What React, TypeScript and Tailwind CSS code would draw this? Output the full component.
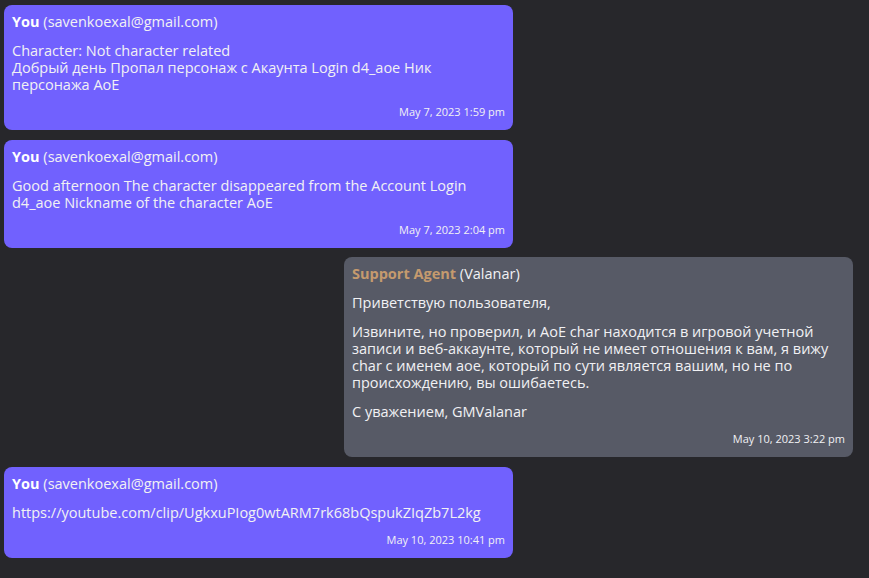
import React from 'react';

interface Message {
  id: number;
  mine: boolean;
  role: string;
  name: string;
  paragraphs: string[][];
  date: string;
}

const messages: Message[] = [
  {
    id: 1,
    mine: true,
    role: 'You',
    name: 'savenkoexal@gmail.com',
    paragraphs: [
      [
        'Character: Not character related',
        'Добрый день Пропал персонаж с Акаунта Login d4_aoe Ник',
        'персонажа AoE',
      ],
    ],
    date: 'May 7, 2023 1:59 pm',
  },
  {
    id: 2,
    mine: true,
    role: 'You',
    name: 'savenkoexal@gmail.com',
    paragraphs: [
      [
        'Good afternoon The character disappeared from the Account Login',
        'd4_aoe Nickname of the character AoE',
      ],
    ],
    date: 'May 7, 2023 2:04 pm',
  },
  {
    id: 3,
    mine: false,
    role: 'Support Agent',
    name: 'Valanar',
    paragraphs: [
      ['Приветствую пользователя,'],
      [
        'Извините, но проверил, и AoE char находится в игровой учетной',
        'записи и веб-аккаунте, который не имеет отношения к вам, я вижу',
        'char с именем aoe, который по сути является вашим, но не по',
        'происхождению, вы ошибаетесь.',
      ],
      ['С уважением, GMValanar'],
    ],
    date: 'May 10, 2023 3:22 pm',
  },
  {
    id: 4,
    mine: true,
    role: 'You',
    name: 'savenkoexal@gmail.com',
    paragraphs: [['https://youtube.com/clip/UgkxuPIog0wtARM7rk68bQspukZIqZb7L2kg']],
    date: 'May 10, 2023 10:41 pm',
  },
];

const Bubble = ({ msg }: { msg: Message }) => (
  <div
    className={
      msg.mine
        ? 'w-[509px] self-start rounded-lg bg-[#7161fe] px-2 pt-2 pb-[11px]'
        : 'w-[509px] self-end rounded-lg bg-[#575a66] px-2 pt-2 pb-[11px]'
    }
  >
    <div className="text-[14.5px] leading-[17px] whitespace-nowrap">
      <span className={msg.mine ? 'font-bold text-white' : 'font-bold text-[#c59a6e]'}>
        {msg.role}
      </span>{' '}
      <span>({msg.name})</span>
    </div>
    {msg.paragraphs.map((p, i) => (
      <p key={i} className="mt-3 text-[14.5px] leading-[17px]">
        {p.map((line, j) => (
          <span key={j} className="block whitespace-nowrap">
            {line}
          </span>
        ))}
      </p>
    ))}
    <div className="mt-3 text-right text-[11px] leading-[14px]">{msg.date}</div>
  </div>
);

export default function App() {
  return (
    <div
      className="flex min-h-[578px] w-full flex-col gap-[9.5px] bg-[#27272b] pt-[5px] pr-4 pl-1 text-[#f1f1f4]"
      style={{ fontFamily: '"Open Sans", sans-serif' }}
    >
      {messages.map((m) => (
        <Bubble key={m.id} msg={m} />
      ))}
    </div>
  );
}
